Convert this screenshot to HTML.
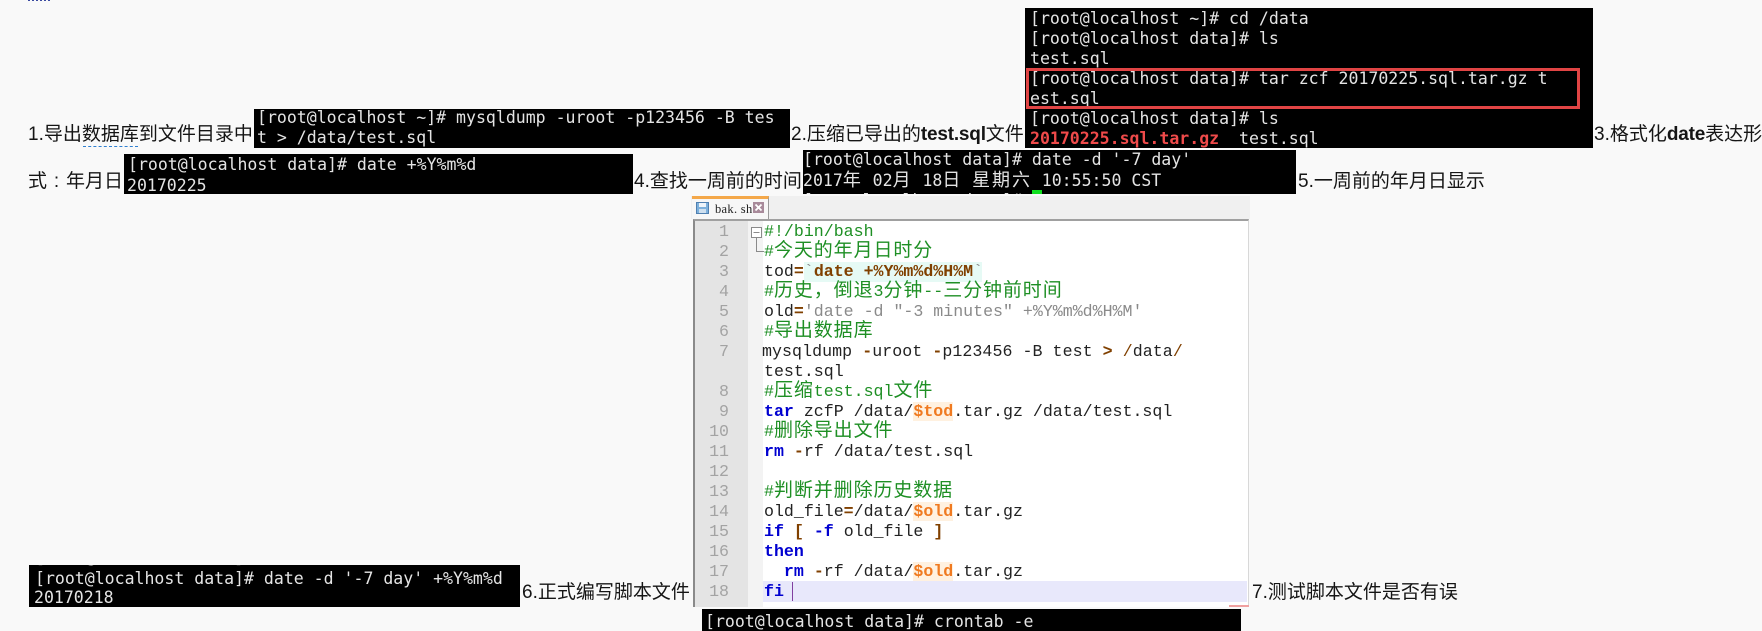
<!DOCTYPE html>
<html lang="zh"><head><meta charset="utf-8"><title>bak.sh</title>
<style>
html,body{margin:0;padding:0;width:1762px;height:631px;overflow:hidden;background:#f9f9f9}
div,span{box-sizing:border-box}
.a{position:absolute;white-space:pre}
.t{position:absolute;font:19px/24px "Liberation Sans","Noto Sans CJK SC",sans-serif;color:#151515;white-space:pre}
.t b{letter-spacing:-.2px}
.b{position:absolute;background:#000;overflow:hidden}
.l{position:absolute;font:16.55px/20px "DejaVu Sans Mono",monospace;color:#e4e4e4;white-space:pre;height:20px}
.w{display:inline-block;width:19.9px;font-family:"Noto Sans CJK SC",sans-serif;font-size:18px;text-align:left;line-height:0}
.n{position:absolute;left:696px;width:33px;text-align:right;font:16.6px/20px "Liberation Mono",monospace;color:#a3a3a3;height:20px}
.c{position:absolute;left:764px;font:16.6px/20px "Liberation Mono",monospace;color:#222;white-space:pre;height:20px}
.z{font:19px/0 "Noto Sans CJK SC",sans-serif;letter-spacing:.9px}
.g{color:#1e8f24}
.o{color:#804000;font-weight:bold}
.k{color:#0000d0;font-weight:bold}
.v{color:#f07a20;background:#fff1e0;font-weight:bold}
.y{color:#8a8a8a}
</style></head><body>

<div class="a" style="left:28px;top:-3px;width:22px;height:4px;border-bottom:2px dotted #3a4aa0"></div>

<div class="t" style="left:28px;top:123px">1.导出数据库到文件目录中</div>
<div class="a" style="left:83px;top:146px;width:55px;height:0;border-top:1px dashed #2f7fd0"></div>
<div class="t" style="left:791px;top:123px">2.压缩已导出的<b>test.sql</b>文件</div>
<div class="t" style="left:1594px;top:123px">3.格式化<b>date</b>表达形</div>
<div class="t" style="left:28px;top:170px">式<span style="display:inline-block;width:19px;text-align:center">:</span>年月日</div>
<div class="t" style="left:634px;top:170px">4.查找一周前的时间</div>
<div class="t" style="left:1298px;top:170px">5.一周前的年月日显示</div>
<div class="t" style="left:522px;top:581px">6.正式编写脚本文件</div>
<div class="t" style="left:1252px;top:581px">7.测试脚本文件是否有误</div>

<div class="b" style="left:254px;top:109px;width:536px;height:39px">
<div class="l" style="left:3px;top:-1px">[root@localhost ~]# mysqldump -uroot -p123456 -B tes</div>
<div class="l" style="left:3px;top:19px">t &gt; /data/test.sql</div>
</div>

<div class="b" style="left:124px;top:154px;width:509px;height:40px">
<div class="l" style="left:4px;top:1px">[root@localhost data]# date +%Y%m%d</div>
<div class="l" style="left:3px;top:22px">20170225</div>
</div>

<div class="b" style="left:803px;top:150px;width:493px;height:44px">
<div class="l" style="left:0;top:0">[root@localhost data]# date -d '-7 day'</div>
<div class="l" style="left:0;top:21px">2017<span class="w">年</span> 02<span class="w">月</span> 18<span class="w">日</span> <span class="w">星</span><span class="w">期</span><span class="w">六</span> 10:55:50 CST</div>
<div class="l" style="left:0;top:41px">[root@localhost data]# </div>
<div class="a" style="left:229px;top:40px;width:10px;height:4px;background:#10e020"></div>
</div>

<div class="b" style="left:1025px;top:8px;width:568px;height:140px">
<div class="l" style="left:5px;top:1px">[root@localhost ~]# cd /data</div>
<div class="l" style="left:5px;top:21px">[root@localhost data]# ls</div>
<div class="l" style="left:5px;top:41px">test.sql</div>
<div class="l" style="left:5px;top:61px">[root@localhost data]# tar zcf 20170225.sql.tar.gz t</div>
<div class="l" style="left:5px;top:81px">est.sql</div>
<div class="l" style="left:5px;top:101px">[root@localhost data]# ls</div>
<div class="l" style="left:5px;top:121px;color:#e4e4e4"><span style="color:#ef4a4a;font-weight:bold">20170225.sql.tar.gz</span>  test.sql</div>
<div class="a" style="left:1px;top:60px;width:554px;height:41px;border:3px solid #e04444"></div>
</div>

<div class="a" style="left:691px;top:196px;width:559px;height:23px;background:#f0f0f0"></div>
<div class="a" style="left:692px;top:196px;width:77px;height:23px;background:#f7f7f7;border-right:1px solid #9a9a9a;border-top:3px solid #f4a84a"></div>
<svg class="a" style="left:696px;top:202px" width="13" height="12" viewBox="0 0 13 12"><rect x=".5" y=".5" width="12" height="11" fill="#7db0dc" stroke="#4f7fb0"/><rect x="3" y="1" width="7" height="4" fill="#eef4fa"/><rect x="3" y="7" width="7" height="4" fill="#cfe0ef"/></svg>
<div class="a" style="left:715px;top:201px;font:12.500px/16px 'Liberation Serif',serif;letter-spacing:.3px;color:#222">bak. sh</div>
<svg class="a" style="left:753px;top:202px" width="11" height="11" viewBox="0 0 11 11"><rect width="11" height="11" fill="#a88a9a"/><path d="M2.500 2.500 8.500 8.500M8.500 2.500 2.500 8.500" stroke="#fff" stroke-width="1.800"/></svg>

<div class="a" style="left:693px;top:219px;width:556px;height:388px;background:#fff;border-top:2px solid #a0a0a0;border-left:2px solid #8a8a8a;border-right:1px solid #d8d8d8"></div>
<div class="a" style="left:695px;top:221px;width:53px;height:386px;background:#e4e4e4"></div>
<div class="a" style="left:748px;top:221px;width:15px;height:386px;background:#f3f3f3"></div>
<div class="a" style="left:763px;top:581px;width:484px;height:21px;background:#e8e8fb"></div>
<div class="a" style="left:804px;top:262px;width:178px;height:20px;background:#e6faf5"></div>
<svg class="a" style="left:750px;top:226px" width="14" height="28" viewBox="0 0 14 28"><rect x="1.500" y="1.500" width="10" height="10" fill="#fff" stroke="#8a8a8a"/><path d="M3.500 6.500H9.500M6.500 11.500V25.500H14" fill="none" stroke="#8a8a8a"/></svg>
<div class="a" style="left:792px;top:582px;width:1px;height:19px;background:#8040a0"></div>

<div class="n" style="top:222px">1</div>
<div class="n" style="top:242px">2</div>
<div class="n" style="top:262px">3</div>
<div class="n" style="top:282px">4</div>
<div class="n" style="top:302px">5</div>
<div class="n" style="top:322px">6</div>
<div class="n" style="top:342px">7</div>
<div class="n" style="top:382px">8</div>
<div class="n" style="top:402px">9</div>
<div class="n" style="top:422px">10</div>
<div class="n" style="top:442px">11</div>
<div class="n" style="top:462px">12</div>
<div class="n" style="top:482px">13</div>
<div class="n" style="top:502px">14</div>
<div class="n" style="top:522px">15</div>
<div class="n" style="top:542px">16</div>
<div class="n" style="top:562px">17</div>
<div class="n" style="top:582px">18</div>

<div class="c g" style="top:222px">#!/bin/bash</div>
<div class="c g" style="top:242px">#<span class="z">今天的年月日时分</span></div>
<div class="c" style="top:262px">tod<span class="o">=</span><span class="y">`</span><span class="o">date +%Y%m%d%H%M</span><span class="y">`</span></div>
<div class="c g" style="top:282px">#<span class="z">历史，倒退</span>3<span class="z">分钟</span>--<span class="z">三分钟前时间</span></div>
<div class="c" style="top:302px">old<span class="o">=</span><span class="y">'date -d "-3 minutes" +%Y%m%d%H%M'</span></div>
<div class="c g" style="top:322px">#<span class="z">导出数据库</span></div>
<div class="c" style="top:342px;left:762px;letter-spacing:.06px">mysqldump <span class="o">-</span>uroot <span class="o">-</span>p123456 -B test <span class="o">&gt;</span> <span class="o" style="font-weight:normal">/</span>data<span class="o" style="font-weight:normal">/</span></div>
<div class="c" style="top:362px">test.sql</div>
<div class="c g" style="top:382px">#<span class="z">压缩</span>test.sql<span class="z">文件</span></div>
<div class="c" style="top:402px"><span class="k">tar</span> zcfP /data/<span class="v">$tod</span>.tar.gz /data/test.sql</div>
<div class="c g" style="top:422px">#<span class="z">删除导出文件</span></div>
<div class="c" style="top:442px"><span class="k">rm</span> <span class="o">-</span>rf /data/test.sql</div>
<div class="c g" style="top:482px">#<span class="z">判断并删除历史数据</span></div>
<div class="c" style="top:502px">old_file<span class="o">=</span>/data/<span class="v">$old</span>.tar.gz</div>
<div class="c" style="top:522px"><span class="k">if</span> <span class="o">[</span> <span class="k">-f</span> old_file <span class="o">]</span></div>
<div class="c" style="top:542px"><span class="k">then</span></div>
<div class="c" style="top:562px">  <span class="k">rm</span> <span class="o">-</span>rf /data/<span class="v">$old</span>.tar.gz</div>
<div class="c" style="top:582px"><span class="k">fi</span></div>

<div class="a" style="left:1229px;top:605px;width:20px;height:2px;background:#f0a0a0"></div>

<div class="b" style="left:29px;top:565px;width:491px;height:42px">
<div class="l" style="left:6px;top:4px">[root@localhost data]# date -d '-7 day' +%Y%m%d</div>
<div class="l" style="left:5px;top:23px">20170218</div>
<div class="l" style="left:6px;top:-17px">[root@localhost data]#</div>
</div>

<div class="b" style="left:702px;top:609px;width:539px;height:22px">
<div class="l" style="left:3px;top:3px">[root@localhost data]# crontab -e</div>
</div>
</body></html>
